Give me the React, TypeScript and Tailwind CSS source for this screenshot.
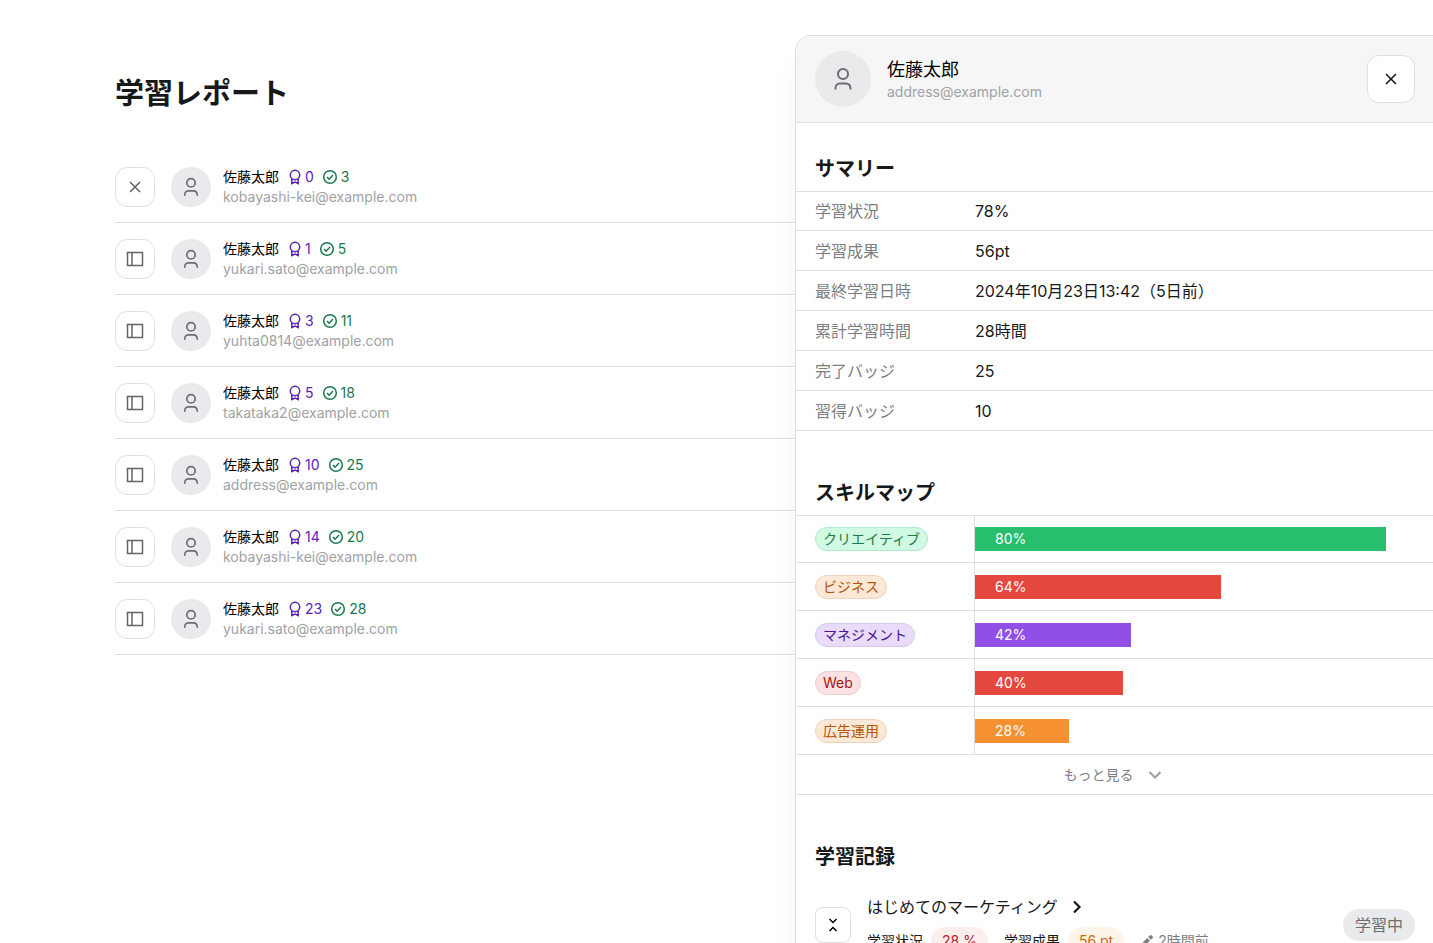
import React from "react";

type Learner = { email: string; earned: number; done: number; open?: boolean };

const learners: Learner[] = [
  { email: "kobayashi-kei@example.com", earned: 0, done: 3, open: true },
  { email: "yukari.sato@example.com", earned: 1, done: 5 },
  { email: "yuhta0814@example.com", earned: 3, done: 11 },
  { email: "takataka2@example.com", earned: 5, done: 18 },
  { email: "address@example.com", earned: 10, done: 25 },
  { email: "kobayashi-kei@example.com", earned: 14, done: 20 },
  { email: "yukari.sato@example.com", earned: 23, done: 28 },
];

const summary = [
  ["学習状況", "78%"],
  ["学習成果", "56pt"],
  ["最終学習日時", "2024年10月23日13:42（5日前）"],
  ["累計学習時間", "28時間"],
  ["完了バッジ", "25"],
  ["習得バッジ", "10"],
];

const skills = [
  { name: "クリエイティブ", value: "80%", width: 89.7, bar: "bg-[#27be6d]", tag: "bg-[#d1fae2] border-[#b5e6cb] text-[#197a49]" },
  { name: "ビジネス", value: "64%", width: 53.7, bar: "bg-[#e5483f]", tag: "bg-[#fce8d6] border-[#edd3bb] text-[#b45309]" },
  { name: "マネジメント", value: "42%", width: 34.1, bar: "bg-[#914fe6]", tag: "bg-[#e9dcfb] border-[#d6c8ea] text-[#4c1499]" },
  { name: "Web", value: "40%", width: 32.3, bar: "bg-[#e5483f]", tag: "bg-[#fbe1e1] border-[#eccccc] text-[#a31515]" },
  { name: "広告運用", value: "28%", width: 20.5, bar: "bg-[#f59130]", tag: "bg-[#fce8d6] border-[#edd3bb] text-[#b45309]" },
];

function UserIcon({ className }: { className: string }) {
  return (
    <svg viewBox="0 0 16 20" fill="none" stroke="currentColor" strokeWidth="1.7" className={className} aria-hidden="true">
      <circle cx="8" cy="5.8" r="4.2" />
      <path d="M1.8 18.8v-1.4a3.6 3.6 0 0 1 3.6-3.6h5.2a3.6 3.6 0 0 1 3.6 3.6v1.4" />
    </svg>
  );
}

function CrossIcon({ className }: { className: string }) {
  return (
    <svg viewBox="0 0 12 12" fill="none" stroke="currentColor" strokeWidth="1.6" className={className} aria-hidden="true">
      <path d="M1 1l10 10M11 1L1 11" />
    </svg>
  );
}

function PanelIcon() {
  return (
    <svg viewBox="0 0 18 16" fill="none" stroke="currentColor" strokeWidth="1.5" className="h-4 w-[18px]" aria-hidden="true">
      <path d="M1.5 1.5h15v13h-15zM6 1.5v13" />
    </svg>
  );
}

function MedalIcon() {
  return (
    <svg viewBox="0 0 12 16" fill="none" stroke="currentColor" strokeWidth="1.5" className="h-4 w-3" aria-hidden="true">
      <circle cx="6" cy="6" r="4.7" />
      <path d="M2.8 9.4v5.1L6 13.1l3.2 1.4V9.4" />
    </svg>
  );
}

function DoneIcon() {
  return (
    <svg viewBox="0 0 16 16" fill="none" stroke="currentColor" strokeWidth="1.5" className="size-4" aria-hidden="true">
      <circle cx="8" cy="8" r="6.3" />
      <path d="M5 8.1l2.1 2.1L11 6.1" />
    </svg>
  );
}

function Heading({ first, children }: { first?: boolean; children: React.ReactNode }) {
  return (
    <h2 className={(first ? "pt-8" : "pt-12") + " pb-2 pl-[19px] text-xl leading-7 font-bold text-[#17181a]"}>
      {children}
    </h2>
  );
}

function LearnerRow({ learner }: { learner: Learner }) {
  return (
    <li className="flex border-b border-[#dedfe1] pt-4 pb-[15px]">
      <button
        type="button"
        aria-label={learner.open ? "閉じる" : "開く"}
        className="flex size-10 shrink-0 items-center justify-center rounded-xl border border-[#dedfe1] bg-white text-[#626569]"
      >
        {learner.open ? <CrossIcon className="size-3" /> : <PanelIcon />}
      </button>
      <span className="ml-4 flex size-10 shrink-0 items-center justify-center rounded-full bg-[#e9eaeb] text-[#6b6e72]">
        <UserIcon className="h-5 w-4" />
      </span>
      <div className="ml-3 text-sm leading-5">
        <div className="flex items-center">
          <span className="text-black">佐藤太郎</span>
          <span className="ml-[10px] flex items-center gap-1 text-[#5b21b6]">
            <MedalIcon />
            {learner.earned}
          </span>
          <span className="ml-2 flex items-center gap-[3px] text-[#18794e]">
            <DoneIcon />
            {learner.done}
          </span>
        </div>
        <p className="text-[#a0a2a5]">{learner.email}</p>
      </div>
    </li>
  );
}

export default function App() {
  return (
    <div className="flex h-screen overflow-hidden bg-white font-['Inter','Noto_Sans_CJK_JP',sans-serif]" lang="ja">
      <main className="min-w-0 flex-1 pt-[74px] pl-[115px]">
        <h1 className="mb-[37px] text-[29px] leading-10 font-bold text-[#17181a]">学習レポート</h1>
        <ul>
          {learners.map((learner, i) => (
            <LearnerRow key={i} learner={learner} />
          ))}
        </ul>
      </main>

      <aside className="mt-[35px] flex w-[638px] shrink-0 flex-col overflow-clip rounded-tl-2xl border-t border-l border-[#dedfe1] bg-white shadow-[0_24px_24px_rgba(0,0,0,0.05)]">
        <header className="flex shrink-0 items-center border-b border-[#dedfe1] bg-[#f6f6f6] py-[15px] pr-[18px] pl-[19px]">
          <span className="flex size-14 shrink-0 items-center justify-center rounded-full bg-[#e9eaeb] text-[#6b6e72]">
            <UserIcon className="h-6 w-5" />
          </span>
          <div className="ml-4 flex-1">
            <p className="text-lg leading-[26px] text-black">佐藤太郎</p>
            <p className="text-sm leading-[18px] text-[#a0a2a5]">address@example.com</p>
          </div>
          <button
            type="button"
            aria-label="閉じる"
            className="flex size-12 items-center justify-center rounded-xl border border-[#dedfe1] bg-white text-[#17181a]"
          >
            <CrossIcon className="size-3" />
          </button>
        </header>

        <div className="min-h-0 flex-1 overflow-y-auto [scrollbar-width:none]">
          <section>
            <Heading first>サマリー</Heading>
            <table className="w-full table-fixed border-separate border-spacing-0 text-base leading-6">
              <tbody>
                {summary.map(([label, value]) => (
                  <tr key={label} className="group h-10">
                    <th scope="row" className="w-[179px] border-b border-[#dedfe1] p-0 pl-[19px] text-left font-normal text-[#7c7f83] group-first:border-t">
                      {label}
                    </th>
                    <td className="border-b border-[#dedfe1] p-0 text-[#17181a] group-first:border-t">{value}</td>
                  </tr>
                ))}
              </tbody>
            </table>
          </section>

          <section>
            <Heading>スキルマップ</Heading>
            <table className="w-full table-fixed border-separate border-spacing-0 text-sm leading-5">
              <tbody>
                {skills.map((skill) => (
                  <tr key={skill.name} className="group h-12">
                    <th scope="row" className="w-[179px] border-r border-b border-[#dedfe1] p-0 pl-[19px] text-left font-normal group-first:border-t">
                      <span className={"flex h-6 w-fit items-center rounded-full border px-[7px] " + skill.tag}>{skill.name}</span>
                    </th>
                    <td className="border-b border-[#dedfe1] p-0 group-first:border-t">
                      <div className={"flex h-6 items-center pl-5 text-white " + skill.bar} style={{ width: `${skill.width}%` }}>
                        {skill.value}
                      </div>
                    </td>
                  </tr>
                ))}
              </tbody>
            </table>
            <button
              type="button"
              className="flex h-10 w-full items-center justify-center gap-[14px] border-b border-[#dedfe1] pr-1 text-sm text-[#7c7f83]"
            >
              もっと見る
              <svg viewBox="0 0 14 10" fill="none" stroke="#9a9da1" strokeWidth="2" className="h-[10px] w-[14px]" aria-hidden="true">
                <path d="M1.5 2L7 7.5 12.5 2" />
              </svg>
            </button>
          </section>

          <section>
            <Heading>学習記録</Heading>
            <div className="flex items-center pt-4 pr-[18px] pl-[19px]">
              <button
                type="button"
                aria-label="折りたたむ"
                className="flex size-9 shrink-0 items-center justify-center rounded-lg border border-[#dedfe1] bg-white text-black"
              >
                <svg viewBox="0 0 10 14" fill="none" stroke="currentColor" strokeWidth="1.5" className="h-[14px] w-[10px]" aria-hidden="true">
                  <path d="M1.5 1L5 4.5 8.5 1M1.5 13L5 9.5 8.5 13" />
                </svg>
              </button>
              <div className="ml-4 flex-1">
                <a href="#course" className="flex h-6 w-fit items-center gap-[14px] text-base leading-6 text-[#17181a]">
                  はじめてのマーケティング
                  <svg viewBox="0 0 10 14" fill="none" stroke="currentColor" strokeWidth="2.2" className="h-[14px] w-[10px]" aria-hidden="true">
                    <path d="M2 1.5L7.5 7 2 12.5" />
                  </svg>
                </a>
                <div className="mt-2 flex h-7 items-center text-sm leading-5">
                  <span className="text-[#17181a]">学習状況</span>
                  <span className="ml-2 flex h-7 items-center rounded-full bg-[#fdeeee] px-[11px] text-[#b42323]">28 %</span>
                  <span className="ml-4 text-[#17181a]">学習成果</span>
                  <span className="ml-2 flex h-7 items-center rounded-full bg-[#fdf3e9] px-[11px] text-[#c96a15]">56 pt</span>
                  <span className="ml-4 flex items-center gap-1 text-[#7c7f83]">
                    <svg viewBox="0 0 14 14" fill="currentColor" className="size-[14px]" aria-hidden="true">
                      <path d="M1 10.3V13h2.7l6.3-6.3-2.7-2.7zM8.2 3.1l1.9-1.9a.9.9 0 0 1 1.2 0l1.5 1.5a.9.9 0 0 1 0 1.2l-1.9 1.9z" />
                    </svg>
                    2時間前
                  </span>
                </div>
              </div>
              <span className="flex h-8 items-center rounded-full bg-[#e9eaeb] px-3 text-base text-[#6b6e72]">学習中</span>
            </div>
          </section>
        </div>
      </aside>
    </div>
  );
}
